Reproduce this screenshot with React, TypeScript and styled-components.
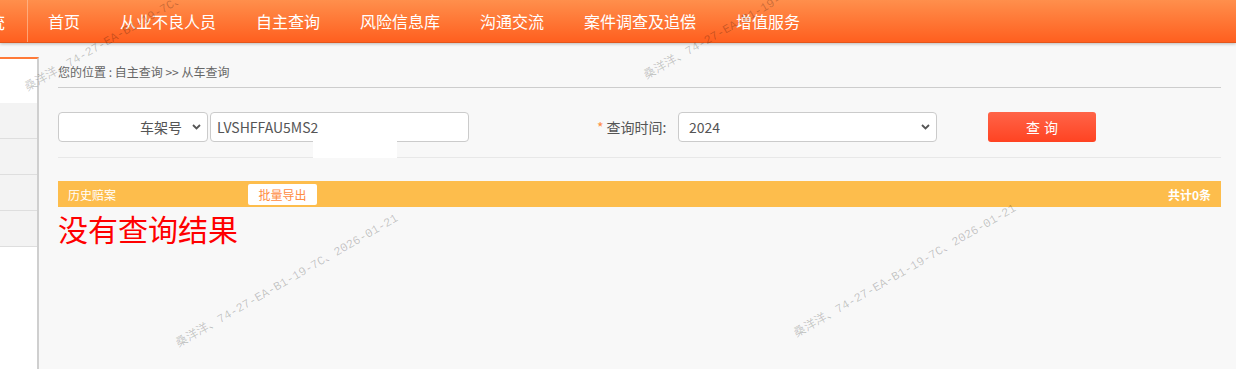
import React from "react";
import styled, { createGlobalStyle } from "styled-components";

const Global = createGlobalStyle`
  html, body { margin: 0; padding: 0; }
  body {
    background: #f8f8f8;
    font-family: "Noto Sans CJK SC", "Noto Sans", sans-serif;
    overflow: hidden;
  }
  * { box-sizing: border-box; }
`;

const Page = styled.div`
  position: relative;
  width: 1236px;
  height: 369px;
  overflow: hidden;
`;

const Header = styled.header`
  display: flex;
  align-items: stretch;
  height: 43px;
  background: linear-gradient(#ff8f4c, #ff5f1f);
  border-bottom: 1px solid #e3561b;
  box-shadow: 0 1px 3px rgba(0, 0, 0, 0.25);
  position: relative;
  z-index: 1;
`;

const Logo = styled.div`
  width: 28px;
  padding-right: 22px;
  display: flex;
  align-items: center;
  justify-content: flex-end;
  overflow: hidden;
  border-right: 1px solid rgba(255, 190, 150, 0.7);
  color: #fff;
  font-size: 17px;
  white-space: nowrap;
  span { flex-shrink: 0; }
`;

const Nav = styled.nav`
  display: flex;
  align-items: center;
`;

const NavItem = styled.a`
  padding: 0 20px;
  color: #fff;
  font-size: 16px;
  line-height: 42px;
  white-space: nowrap;
  text-decoration: none;
`;

const Body = styled.div`
  display: flex;
  height: 326px;
`;

const Sidebar = styled.aside`
  width: 39px;
  margin-top: 14px;
  background: #fff;
  border-top: 2px solid #ff7a38;
  border-right: 2px solid #cfcfcf;
  display: flex;
  flex-direction: column;
  padding-top: 44px;
`;

const SideRow = styled.div`
  height: 36px;
  background: #f3f3f3;
  border-bottom: 1px solid #dedede;
`;

const Main = styled.main`
  width: 1163px;
  margin-left: 19px;
  margin-top: 14px;
`;

const Breadcrumb = styled.div`
  height: 31px;
  line-height: 30px;
  font-size: 12px;
  color: #666;
  border-bottom: 1px solid #cdcdcd;
`;

const FormRow = styled.div`
  display: flex;
  align-items: center;
  padding: 24px 0 15px;
  border-bottom: 1px solid #e8e8e8;
`;

const SelectBox = styled.div<{ $w: number; $right?: boolean }>`
  width: ${(p) => p.$w}px;
  height: 30px;
  background: #fff;
  border: 1px solid #cbcbcb;
  border-radius: 4px;
  display: flex;
  align-items: center;
  justify-content: ${(p) => (p.$right ? "flex-end" : "space-between")};
  gap: 10px;
  padding: 0 6px 0 10px;
  font-size: 14px;
  color: #555;
`;

const InputWrap = styled.div`
  position: relative;
  margin-left: 2px;
`;

const TextInput = styled.div`
  width: 259px;
  height: 30px;
  background: #fff;
  border: 1px solid #cbcbcb;
  border-radius: 4px;
  padding: 0 6px;
  display: flex;
  align-items: center;
  font-size: 14px;
  color: #555;
`;

const Patch = styled.div`
  position: absolute;
  left: 103px;
  top: 27px;
  width: 84px;
  height: 19px;
  background: #fff;
`;

const Label = styled.label`
  margin-left: 128px;
  width: 81px;
  font-size: 14px;
  color: #555;
  white-space: nowrap;
  b {
    color: #ff8c42;
    font-weight: normal;
    margin-right: 3px;
  }
`;

const SearchButton = styled.button`
  margin-left: 51px;
  width: 108px;
  height: 30px;
  border: none;
  border-radius: 3px;
  background: linear-gradient(#ff6448, #ff4322);
  color: #fff;
  font-family: inherit;
  font-size: 14px;
  letter-spacing: 4px;
  text-indent: 4px;
  padding: 0;
`;

const Bar = styled.div`
  margin-top: 23px;
  height: 26px;
  background: #fdbd4c;
  display: flex;
  align-items: center;
  padding: 0 10px;
  color: #fff;
  font-size: 12px;
`;

const BarTitle = styled.span`
  width: 180px;
`;

const ExportButton = styled.button`
  width: 69px;
  height: 21px;
  border: none;
  border-radius: 2px;
  background: #fff;
  color: #ff8c42;
  font-family: inherit;
  font-size: 12px;
  padding: 0;
`;

const Total = styled.span`
  margin-left: auto;
  font-weight: bold;
`;

const Empty = styled.div`
  color: #ff0000;
  font-size: 30px;
  line-height: 36px;
  margin-top: 3px;
`;

const Overlay = styled.div`
  position: absolute;
  inset: 0;
  pointer-events: none;
  z-index: 5;
`;

const Mark = styled.div`
  position: absolute;
  font-family: "Liberation Mono", "Noto Sans CJK SC", monospace;
  font-size: 12px;
  line-height: 12px;
  color: rgba(0, 0, 0, 0.22);
  white-space: nowrap;
  transform-origin: left bottom;
  transform: rotate(-30deg);
`;

const Chevron = () => (
  <svg width="9" height="6" viewBox="0 0 9 6">
    <path d="M1 1 L4.5 4.5 L8 1" fill="none" stroke="#555" strokeWidth="1.8" />
  </svg>
);

const marks = [
  { x: 29, y: 94 },
  { x: 648, y: 82 },
  { x: 180, y: 350 },
  { x: 798, y: 340 },
];

const navItems = ["首页", "从业不良人员", "自主查询", "风险信息库", "沟通交流", "案件调查及追偿", "增值服务"];

export default function App() {
  return (
    <Page>
      <Global />
      <Header>
        <Logo>
          <span>管理系统</span>
        </Logo>
        <Nav>
          {navItems.map((n) => (
            <NavItem key={n}>{n}</NavItem>
          ))}
        </Nav>
      </Header>
      <Body>
        <Sidebar>
          <SideRow />
          <SideRow />
          <SideRow />
          <SideRow />
        </Sidebar>
        <Main>
          <Breadcrumb>您的位置 : 自主查询 &gt;&gt; 从车查询</Breadcrumb>
          <FormRow>
            <SelectBox $w={150} $right>
              <span>车架号</span>
              <Chevron />
            </SelectBox>
            <InputWrap>
              <TextInput>LVSHFFAU5MS2</TextInput>
              <Patch />
            </InputWrap>
            <Label>
              <b>*</b>查询时间:
            </Label>
            <SelectBox $w={259}>
              <span>2024</span>
              <Chevron />
            </SelectBox>
            <SearchButton>查询</SearchButton>
          </FormRow>
          <Bar>
            <BarTitle>历史赔案</BarTitle>
            <ExportButton>批量导出</ExportButton>
            <Total>共计0条</Total>
          </Bar>
          <Empty>没有查询结果</Empty>
        </Main>
      </Body>
      <Overlay>
        {marks.map((m, i) => (
          <Mark key={i} style={{ left: m.x, top: m.y - 12 }}>
            桑洋洋、74-27-EA-B1-19-7C、2026-01-21
          </Mark>
        ))}
      </Overlay>
    </Page>
  );
}
